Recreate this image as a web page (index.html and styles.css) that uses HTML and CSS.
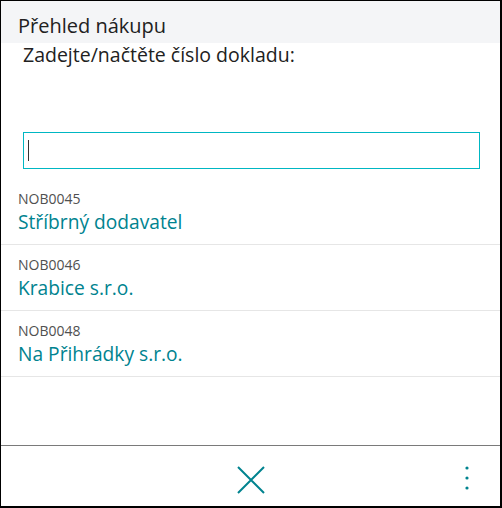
FILE: index.html
```html
<!DOCTYPE html>
<html lang="cs">
<head>
<meta charset="utf-8">
<link rel="stylesheet" href="styles.css">
</head>
<body>
<div class="frame">
  <div class="header"><span class="title">Přehled nákupu</span></div>
  <div class="prompt">Zadejte/načtěte číslo dokladu:</div>
  <div class="field-wrap">
    <div class="field"><span class="caret"></span></div>
  </div>
  <ul class="list">
    <li class="row"><span class="code">NOB0045</span><span class="name">Stříbrný dodavatel</span></li>
    <li class="row"><span class="code">NOB0046</span><span class="name">Krabice s.r.o.</span></li>
    <li class="row"><span class="code">NOB0048</span><span class="name">Na Přihrádky s.r.o.</span></li>
  </ul>
  <div class="footer">
    <button class="btn close" aria-label="Zavřít">
      <svg width="28" height="28" viewBox="0 0 28 28"><path d="M1 1 L27 27 M27 1 L1 27" stroke="#00838f" stroke-width="2" fill="none"/></svg>
    </button>
    <button class="btn more" aria-label="Další">
      <svg width="6" height="26" viewBox="0 0 6 26"><circle cx="3" cy="3" r="1.6" fill="#00838f"/><circle cx="3" cy="13" r="1.6" fill="#00838f"/><circle cx="3" cy="23" r="1.6" fill="#00838f"/></svg>
    </button>
  </div>
</div>
</body>
</html>
```
FILE: styles.css
```css
html, body {
  margin: 0;
  padding: 0;
  background: #fff;
}
.frame {
  width: 502px;
  height: 508px;
  box-sizing: border-box;
  border: 1px solid #000;
  border-right-width: 2px;
  border-bottom-width: 2px;
  display: flex;
  flex-direction: column;
  font-family: "Open Sans", "Noto Sans", sans-serif;
  color: #212121;
}
.header {
  height: 42px;
  box-sizing: border-box;
  background: #f4f5f7;
  padding: 11px 0 0 17px;
}
.title {
  font-size: 20px;
  line-height: 27px;
  color: #212121;
}
.prompt {
  font-size: 19.5px;
  padding-left: 22px;
  line-height: 24px;
}
.field-wrap {
  padding-left: 22px;
  margin-top: 65px;
}
.field {
  width: 457px;
  height: 37px;
  box-sizing: border-box;
  border: 1px solid #00b7c3;
  display: flex;
  align-items: center;
  padding-left: 4px;
}
.caret {
  width: 1px;
  height: 21px;
  background: #333;
}
.list {
  list-style: none;
  margin: 10px 0 0 0;
  padding: 0;
}
.row {
  height: 66px;
  box-sizing: border-box;
  border-bottom: 1px solid #e6e6e6;
  padding-left: 17px;
  padding-top: 10px;
  display: flex;
  flex-direction: column;
}
.code {
  font-size: 14px;
  line-height: 20px;
  color: #505050;
}
.name {
  font-size: 19.2px;
  line-height: 26px;
  color: #00838f;
}
.footer {
  margin-top: auto;
  height: 61px;
  box-sizing: border-box;
  border-top: 1px solid #7a7a7a;
  padding-top: 7px;
  display: flex;
  align-items: center;
  justify-content: center;
  position: relative;
}
.btn {
  background: none;
  border: 0;
  padding: 0;
  display: flex;
  cursor: pointer;
}
.more {
  position: absolute;
  right: 30px;
  top: 19px;
}
```
